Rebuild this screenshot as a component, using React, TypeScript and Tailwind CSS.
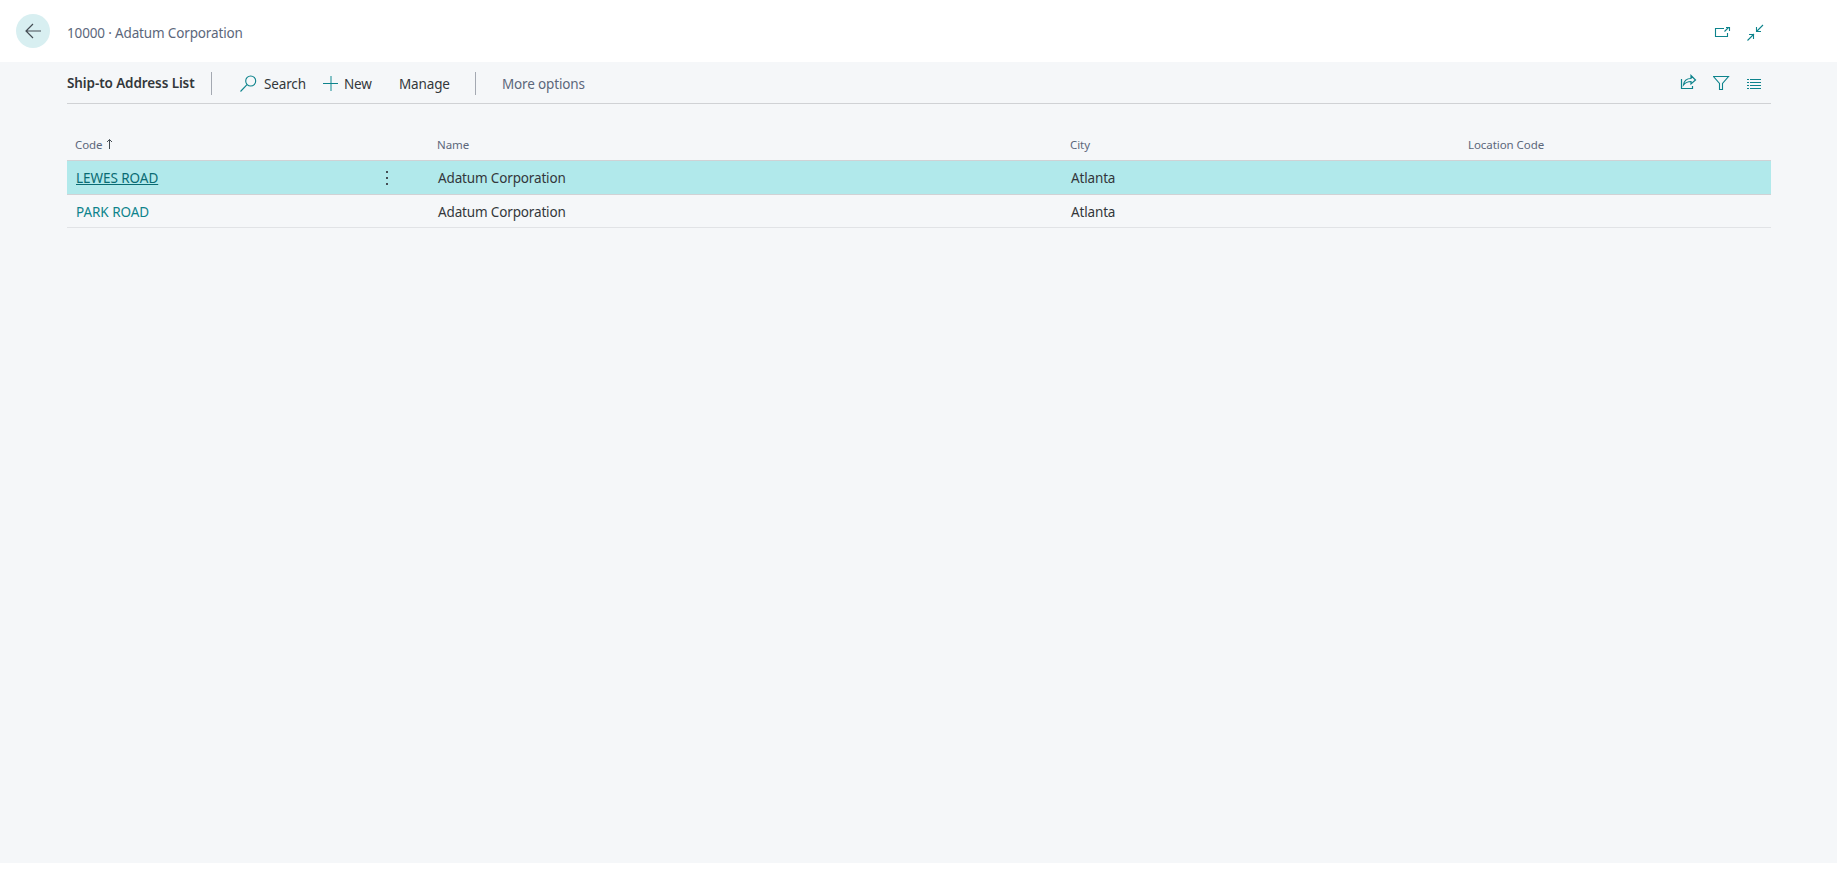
const rows = [
  { code: 'LEWES ROAD', name: 'Adatum Corporation', city: 'Atlanta', location: '', selected: true },
  { code: 'PARK ROAD', name: 'Adatum Corporation', city: 'Atlanta', location: '', selected: false },
];

const columns = 'grid grid-cols-[364px_633px_398px_309px]';

function Header() {
  return (
    <header className="flex h-[62px] items-start bg-white pr-[73px] pl-4">
      <button className="mt-3.5 flex h-[34px] w-[34px] items-center justify-center rounded-full bg-[#d8eff1]" aria-label="Back">
        <svg width="34" height="34" fill="none" stroke="#454d54" strokeWidth="1.2">
          <path d="M25 17H10M17 10l-7 7 7 7" />
        </svg>
      </button>
      <div className="mt-[23px] ml-[17px] leading-5 text-[#5c677b]">10000 · Adatum Corporation</div>
      <div className="mt-6 ml-auto flex gap-4 text-[#0d838c]">
        <svg width="17" height="18" fill="none" stroke="currentColor" strokeWidth="1.1">
          <path d="M10 4.500H1.500v8h12V9M10.500 7.500l4-4M12 3.500h3.500V7" />
        </svg>
        <svg width="17" height="18" fill="none" stroke="currentColor" strokeWidth="1.1">
          <path d="M16 1L9.5 7.5M9.5 3v4.5H14M.5 16.5L7 10M2 10.5h4.5V15" />
        </svg>
      </div>
    </header>
  );
}

function Toolbar() {
  return (
    <div className="flex h-[42px] items-start border-b border-[#d0d2d5] pt-2.5 leading-6 text-[#33373b]">
      <h1 className="w-36 leading-[22px] font-semibold tracking-[-0.1px] whitespace-nowrap">Ship-to Address List</h1>
      <div className="h-[23px] w-px bg-[#a4a9b2]" />
      <button className="ml-7 flex w-[83px]">
        <svg className="mt-[3px] mr-[7px] text-[#0d838c]" width="17" height="18" fill="none" stroke="currentColor" strokeWidth="1.1">
          <circle cx="10.7" cy="6" r="5" />
          <path d="M7 9.7L.5 16.5" />
        </svg>
        Search
      </button>
      <button className="flex w-[76px]">
        <svg className="mt-1 mr-[5px]" width="16" height="16" fill="none">
          <path d="M8 0v15" stroke="#83c1c6" strokeWidth="2" />
          <path d="M0 7.5h15" stroke="#0d838c" />
        </svg>
        New
      </button>
      <button className="w-[76px] text-left">Manage</button>
      <div className="h-[23px] w-px bg-[#a4a9b2]" />
      <button className="ml-[26px] text-[#5c677b]">More options</button>
      <div className="mt-0.5 mr-2 ml-auto flex gap-4 text-[#0d838c]">
        <svg width="18" height="18" fill="none" stroke="currentColor" strokeWidth="1.2">
          <path d="M2.500 5v9.500h11V12" />
          <path d="M4.500 11C5 7 7.500 4.500 12 4.500V1.500L16.500 6 12 10V7.500C8.500 7.500 6.500 8.500 4.500 11z" />
        </svg>
        <svg width="17" height="18" fill="none" stroke="currentColor" strokeWidth="1.1">
          <path d="M.5 2.500H15.500L9.500 9.500V15.500H6.500V9.500L.5 2.500z" />
        </svg>
        <svg width="17" height="18" fill="none" stroke="currentColor" strokeWidth="1.2">
          <path d="M1 5.500h2M4 5.500h11M1 8.500h2M4 8.500h11M1 11.500h2M4 11.500h11M1 14.500h2M4 14.500h11" />
        </svg>
      </div>
    </div>
  );
}

function AddressTable() {
  return (
    <div className="pt-8">
      <div className={`${columns} h-[25px] border-b border-[#d0d2d5] text-[11.5px] leading-[18px] tracking-[-0.06px] text-[#5c677b]`}>
        <div className="flex pl-2">
          Code
          <svg className="mt-[3px] ml-0.5" width="9" height="12" fill="none" stroke="#454d54">
            <path d="M4.500 10V.5M2 3l2.500-2.500L7 3" />
          </svg>
        </div>
        <div className="pl-1.5">Name</div>
        <div className="pl-1.5">City</div>
        <div className="pl-1.5">Location Code</div>
      </div>
      {rows.map((row) => (
        <div
          key={row.code}
          className={`${columns} leading-[34px] text-[#33373b] ${
            row.selected ? 'h-[34px] border-b border-[#d0d2d5] bg-[#b1e9eb]' : 'h-[33px] border-b border-[#e1e3e6]'
          }`}
        >
          <div className="flex justify-between pr-[42px] pl-[9px] tracking-[-0.05px]">
            <a className={row.selected ? 'text-[#096b73] underline underline-offset-1' : 'text-[#0d838c]'}>{row.code}</a>
            {row.selected && (
              <svg className="mt-[9px]" width="3" height="16" fill="#454d54">
                <path d="M0 1h2v2H0zM0 7h2v2H0zM0 13h2v2H0z" />
              </svg>
            )}
          </div>
          <div className="pl-[7px]">{row.name}</div>
          <div className="pl-[7px]">{row.city}</div>
          <div className="pl-[7px]">{row.location}</div>
        </div>
      ))}
    </div>
  );
}

export default function App() {
  return (
    <div className="h-[887px] bg-white font-['Noto_Sans',sans-serif] text-[13.5px] tracking-[-0.15px]">
      <Header />
      <main className="h-[801px] bg-[#f5f7f9] pr-[66px] pl-[67px]">
        <Toolbar />
        <AddressTable />
      </main>
    </div>
  );
}
